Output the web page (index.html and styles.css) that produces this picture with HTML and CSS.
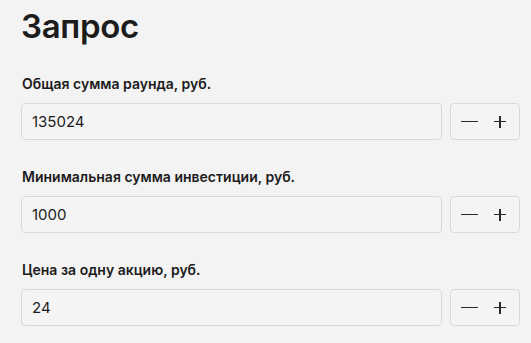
FILE: index.html
```html
<!DOCTYPE html>
<html lang="ru">
<head>
<meta charset="utf-8">
<link rel="stylesheet" href="styles.css">
</head>
<body>
<div class="page">
  <h1 class="title">Запрос</h1>
  <div class="field">
    <div class="label">Общая сумма раунда, руб.</div>
    <div class="row">
      <div class="input">135024</div>
      <div class="stepper"><span class="minus"></span><span class="plus"></span></div>
    </div>
  </div>
  <div class="field">
    <div class="label">Минимальная сумма инвестиции, руб.</div>
    <div class="row">
      <div class="input">1000</div>
      <div class="stepper"><span class="minus"></span><span class="plus"></span></div>
    </div>
  </div>
  <div class="field">
    <div class="label">Цена за одну акцию, руб.</div>
    <div class="row">
      <div class="input">24</div>
      <div class="stepper"><span class="minus"></span><span class="plus"></span></div>
    </div>
  </div>
</div>
</body>
</html>
```
FILE: styles.css
```css
html, body {
  margin: 0;
  padding: 0;
  background: #f3f3f3;
}
body {
  font-family: Inter, "Liberation Sans", Arial, sans-serif;
  color: #1c1c1c;
}
.page {
  padding: 6px 11px 0 21px;
}
.title {
  margin: 0;
  font-size: 33px;
  line-height: 40px;
  font-weight: 600;
  letter-spacing: -0.3px;
}
.field {
  display: flex;
  flex-direction: column;
  gap: 11px;
  margin-top: 28px;
}
.field:first-of-type {
  margin-top: 29px;
}
.label {
  font-size: 14px;
  line-height: 17px;
  font-weight: 600;
  padding-left: 1px;
}
.row {
  display: flex;
  gap: 8px;
  height: 37px;
}
.input {
  flex: 1;
  box-sizing: border-box;
  border: 1px solid #d9d9d9;
  border-radius: 4px;
  background: #f4f4f4;
  display: flex;
  align-items: center;
  padding-left: 10px;
  font-size: 15px;
}
.stepper {
  width: 70px;
  box-sizing: border-box;
  border: 1px solid #d9d9d9;
  border-radius: 4px;
  background: #f4f4f4;
  display: flex;
  align-items: center;
  padding-left: 10px;
  gap: 16px;
}
.minus {
  display: block;
  width: 17px;
  height: 1.5px;
  background: #2a2a2a;
}
.plus {
  display: block;
  position: relative;
  width: 12px;
  height: 12px;
}
.plus::before, .plus::after {
  content: "";
  position: absolute;
  background: #2a2a2a;
}
.plus::before {
  left: 0;
  right: 0;
  top: 5.25px;
  height: 1.5px;
}
.plus::after {
  top: 0;
  bottom: 0;
  left: 5.25px;
  width: 1.5px;
}
```
